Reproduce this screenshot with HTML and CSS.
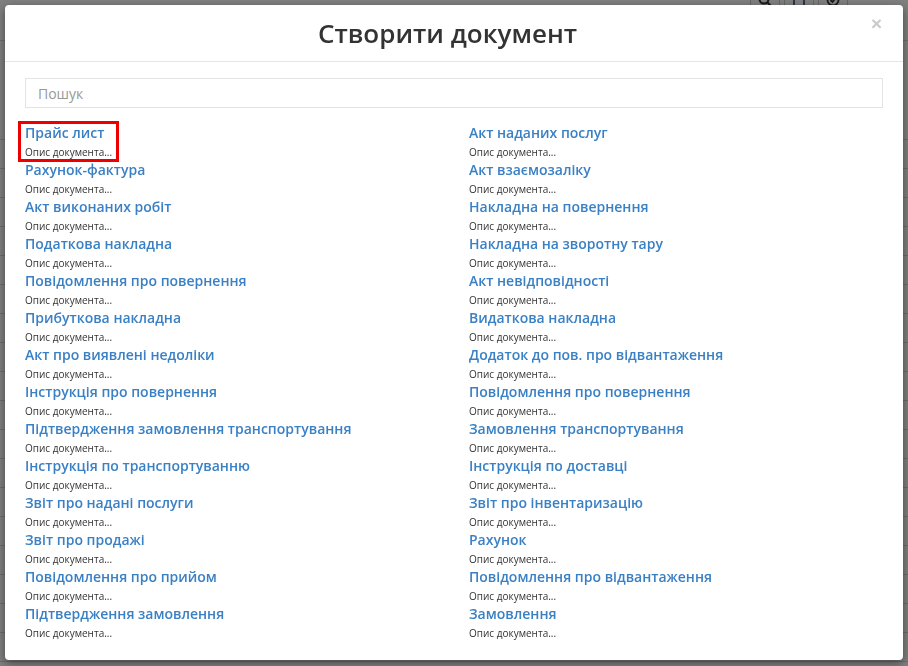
FILE: index.html
```html
<!DOCTYPE html>
<html lang="uk">
<head>
<meta charset="utf-8">
<title>Створити документ</title>
<link rel="stylesheet" href="styles.css">
</head>
<body>
<div class="page">
  <div class="toolbar">
    <div class="tool-group">
      <span class="tool"><svg width="14" height="14" viewBox="0 0 14 14"><circle cx="6" cy="6" r="4.5" fill="none" stroke="#333" stroke-width="2"/><path d="M9 9l4 4" stroke="#333" stroke-width="2"/></svg></span>
      <span class="tool"><svg width="14" height="14" viewBox="0 0 14 14"><rect x="2" y="1" width="10" height="12" fill="none" stroke="#2a4a80" stroke-width="1.6"/><rect x="4" y="1" width="6" height="4" fill="none" stroke="#2a4a80" stroke-width="1.4"/></svg></span>
      <span class="tool"><svg width="14" height="14" viewBox="0 0 14 14"><circle cx="7" cy="7" r="5.5" fill="none" stroke="#333" stroke-width="1.8"/><path d="M4.5 7l2 2 3-4" fill="none" stroke="#333" stroke-width="1.8"/></svg></span>
    </div>
  </div>
  <div class="rows">
    <div class="row"></div><div class="row"></div><div class="row"></div><div class="row"></div>
    <div class="row"></div><div class="row"></div><div class="row"></div><div class="row"></div>
    <div class="row"></div><div class="row"></div><div class="row"></div><div class="row"></div>
    <div class="row"></div><div class="row"></div><div class="row"></div><div class="row"></div>
    <div class="row"></div><div class="row"></div><div class="row"></div><div class="row"></div>
  </div>
</div>
<div class="backdrop"></div>
<div class="modal">
  <div class="dialog">
    <div class="header">
      <h1 class="title">Створити документ</h1>
      <button class="close" type="button">×</button>
    </div>
    <div class="body">
      <input class="search" type="text" placeholder="Пошук">
      <div class="columns">
        <div class="col">
          <div class="doc selected"><a class="doc-title">Прайс лист</a><div class="doc-desc">Опис документа...</div></div>
          <div class="doc"><a class="doc-title">Рахунок-фактура</a><div class="doc-desc">Опис документа...</div></div>
          <div class="doc"><a class="doc-title">Акт виконаних робіт</a><div class="doc-desc">Опис документа...</div></div>
          <div class="doc"><a class="doc-title">Податкова накладна</a><div class="doc-desc">Опис документа...</div></div>
          <div class="doc"><a class="doc-title">Повідомлення про повернення</a><div class="doc-desc">Опис документа...</div></div>
          <div class="doc"><a class="doc-title">Прибуткова накладна</a><div class="doc-desc">Опис документа...</div></div>
          <div class="doc"><a class="doc-title">Акт про виявлені недоліки</a><div class="doc-desc">Опис документа...</div></div>
          <div class="doc"><a class="doc-title">Інструкція про повернення</a><div class="doc-desc">Опис документа...</div></div>
          <div class="doc"><a class="doc-title">Підтвердження замовлення транспортування</a><div class="doc-desc">Опис документа...</div></div>
          <div class="doc"><a class="doc-title">Інструкція по транспортуванню</a><div class="doc-desc">Опис документа...</div></div>
          <div class="doc"><a class="doc-title">Звіт про надані послуги</a><div class="doc-desc">Опис документа...</div></div>
          <div class="doc"><a class="doc-title">Звіт про продажі</a><div class="doc-desc">Опис документа...</div></div>
          <div class="doc"><a class="doc-title">Повідомлення про прийом</a><div class="doc-desc">Опис документа...</div></div>
          <div class="doc"><a class="doc-title">Підтвердження замовлення</a><div class="doc-desc">Опис документа...</div></div>
        </div>
        <div class="col">
          <div class="doc"><a class="doc-title">Акт наданих послуг</a><div class="doc-desc">Опис документа...</div></div>
          <div class="doc"><a class="doc-title">Акт взаємозаліку</a><div class="doc-desc">Опис документа...</div></div>
          <div class="doc"><a class="doc-title">Накладна на повернення</a><div class="doc-desc">Опис документа...</div></div>
          <div class="doc"><a class="doc-title">Накладна на зворотну тару</a><div class="doc-desc">Опис документа...</div></div>
          <div class="doc"><a class="doc-title">Акт невідповідності</a><div class="doc-desc">Опис документа...</div></div>
          <div class="doc"><a class="doc-title">Видаткова накладна</a><div class="doc-desc">Опис документа...</div></div>
          <div class="doc"><a class="doc-title">Додаток до пов. про відвантаження</a><div class="doc-desc">Опис документа...</div></div>
          <div class="doc"><a class="doc-title">Повідомлення про повернення</a><div class="doc-desc">Опис документа...</div></div>
          <div class="doc"><a class="doc-title">Замовлення транспортування</a><div class="doc-desc">Опис документа...</div></div>
          <div class="doc"><a class="doc-title">Інструкція по доставці</a><div class="doc-desc">Опис документа...</div></div>
          <div class="doc"><a class="doc-title">Звіт про інвентаризацію</a><div class="doc-desc">Опис документа...</div></div>
          <div class="doc"><a class="doc-title">Рахунок</a><div class="doc-desc">Опис документа...</div></div>
          <div class="doc"><a class="doc-title">Повідомлення про відвантаження</a><div class="doc-desc">Опис документа...</div></div>
          <div class="doc"><a class="doc-title">Замовлення</a><div class="doc-desc">Опис документа...</div></div>
        </div>
      </div>
    </div>
  </div>
</div>
</body>
</html>
```

FILE: styles.css
```css
html, body {
  margin: 0;
  padding: 0;
  height: 100%;
  overflow: hidden;
}
body {
  font-family: "Open Sans", "Noto Sans", sans-serif;
  color: #333;
  background: #fff;
}

/* background page */
.page {
  height: 100%;
}
.toolbar {
  height: 40px;
  display: flex;
  justify-content: flex-end;
  padding-right: 60px;
  border-bottom: 1px solid #ddd;
}
.tool-group {
  display: flex;
  margin-top: -20px;
}
.tool {
  width: 30px;
  height: 30px;
  border: 1px solid #ccc;
  border-radius: 3px;
  margin-left: 4px;
  display: flex;
  align-items: flex-end;
  justify-content: center;
  padding-bottom: 2px;
  box-sizing: border-box;
  background: #fff;
}
.rows {
  padding-top: 70px;
}
.row {
  height: 28px;
  border-bottom: 1px solid #d8d8d8;
}

/* overlay */
.backdrop {
  position: fixed;
  inset: 0;
  background: rgba(0, 0, 0, 0.5);
}
.modal {
  position: fixed;
  inset: 0;
  padding: 5px 5px 0 5px;
}
.dialog {
  background: #fff;
  border-radius: 4px;
  box-shadow: 0 3px 10px rgba(0, 0, 0, 0.45);
  height: 655px;
  box-sizing: border-box;
  display: flex;
  flex-direction: column;
}
.header {
  position: relative;
  padding: 15px 28px 15px 15px;
  border-bottom: 1px solid #e5e5e5;
  text-align: center;
}
.title {
  margin: 0;
  font-size: 26px;
  line-height: 26px;
  font-weight: 600;
  color: #333;
}
.close {
  position: absolute;
  top: 8px;
  right: 21px;
  border: 0;
  background: none;
  padding: 0;
  font-family: "Liberation Sans", Arial, sans-serif;
  font-size: 19px;
  font-weight: 700;
  line-height: 21px;
  color: #cacaca;
}
.body {
  padding: 16px 20px 15px;
}
.search {
  display: block;
  width: 100%;
  box-sizing: border-box;
  height: 30px;
  border: 1px solid #e3e3e3;
  border-radius: 0;
  padding: 0 12px;
  font-family: "Open Sans", sans-serif;
  font-size: 14px;
  color: #555;
  outline: none;
}
.search::placeholder {
  color: #999;
}
.columns {
  display: grid;
  grid-template-columns: 1fr 1fr;
  margin: 14px -15px 0;
}
.col {
  padding: 0 15px;
}
.doc {
  height: 37px;
}
.doc.selected {
  position: relative;
  width: fit-content;
}
.doc.selected::after {
  content: "";
  position: absolute;
  left: -7px;
  right: -7px;
  top: -1px;
  bottom: -3px;
  border: 3px solid #e00;
}
.doc-title {
  display: block;
  font-size: 14px;
  line-height: 21px;
  font-weight: 600;
  color: #3a80c5;
  text-decoration: none;
  white-space: nowrap;
}
.doc-desc {
  padding-top: 2px;
  font-size: 10px;
  line-height: 14px;
  color: #333;
  white-space: nowrap;
}
```
